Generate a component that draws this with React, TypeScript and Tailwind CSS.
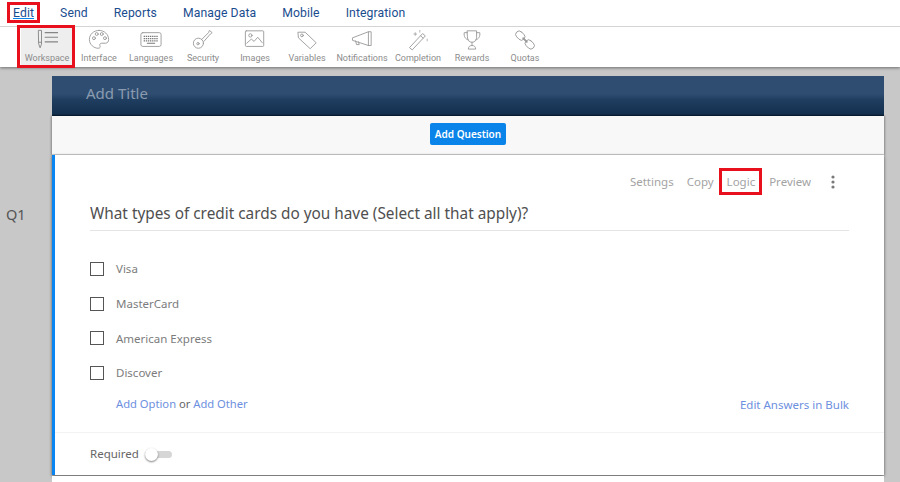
const navItems = ["Edit", "Send", "Reports", "Manage Data", "Mobile", "Integration"];

const stroke = { fill: "none", stroke: "#9a9a9a", strokeWidth: 1, strokeLinejoin: "round" as const, strokeLinecap: "round" as const };

const tools = [
  {
    label: "Workspace",
    width: "w-[52px]",
    icon: (
      <g {...stroke} stroke="#858585">
        <path d="M3 1.500h3v15l-1.500 4L3 16.500z" />
        <path d="M3 14.500h3" />
        <path d="M10 4h14M10 9h14M10 14h14" strokeWidth={1.3} />
      </g>
    ),
  },
  {
    label: "Interface",
    width: "w-[52px]",
    icon: (
      <g {...stroke}>
        <path d="M12 1.500C6 1.500 1.500 6 1.500 11.500 1.500 17 6.500 21 11 21c2.500 0 2.500-1.500 2-2.700-.6-1.500.2-2.800 2-2.800h4c2.500 0 3.500-2 3.500-4C22.500 6 18 1.500 12 1.500z" />
        <circle cx="6.500" cy="10" r="1.600" />
        <circle cx="9.500" cy="5.500" r="1.600" />
        <circle cx="15" cy="5.500" r="1.600" />
        <circle cx="18.500" cy="10" r="1.600" />
      </g>
    ),
  },
  {
    label: "Languages",
    width: "w-[52px]",
    icon: (
      <g {...stroke}>
        <rect x="1" y="4" width="22" height="15" rx="2" />
        <path d="M4 8h16M4 10.500h16M4 13h16" stroke="#777" strokeDasharray="1.500 0.800" strokeWidth={1.500} strokeLinecap="butt" />
        <path d="M8 15.500h8" stroke="#777" strokeWidth={1.200} />
      </g>
    ),
  },
  {
    label: "Security",
    width: "w-[52px]",
    icon: (
      <g {...stroke}>
        <circle cx="7" cy="15.500" r="5.500" />
        <circle cx="6.500" cy="16" r="1.300" />
        <path d="M10.500 11.500L18 4l1-2.500 3 2.500-2 1.500-7 8" />
      </g>
    ),
  },
  {
    label: "Images",
    width: "w-[52px]",
    icon: (
      <g {...stroke}>
        <rect x="1.500" y="2" width="20" height="17" rx="1" />
        <circle cx="7" cy="7" r="1.800" />
        <path d="M3 15.500l5-4.500 3 2.500 4-4.500 5 6" />
      </g>
    ),
  },
  {
    label: "Variables",
    width: "w-[52px]",
    icon: (
      <g {...stroke}>
        <path d="M2.500 3.500h7.500l12 11.500-6.500 6.500L3 10z" />
        <circle cx="6.500" cy="7" r="1.500" />
      </g>
    ),
  },
  {
    label: "Notifications",
    width: "w-[58px]",
    icon: (
      <g {...stroke}>
        <path d="M2 9.500l17-6.500v15L2 12.500z" />
        <path d="M19 3h3v15h-3M5 13l1 4h3l-.8-3" />
      </g>
    ),
  },
  {
    label: "Completion",
    width: "w-[54px]",
    icon: (
      <g {...stroke}>
        <path d="M3 20l14-15 3 2.500L6 22.500z" />
        <path d="M15 7.500l2.500 2.500" />
        <path d="M9 4v3M7.500 5.500h3M14 1.500v2M22 11v2" strokeWidth={0.8} />
      </g>
    ),
  },
  {
    label: "Rewards",
    width: "w-[54px]",
    icon: (
      <g {...stroke}>
        <path d="M7 2h10v7c0 3-2 5.500-5 5.500S7 12 7 9z" />
        <path d="M7 4H3.500C3 8 4.500 11 8 12M17 4h3.500C21 8 19.500 11 16 12" />
        <path d="M12 14.500V18M8 21.500c0-2 1.500-3.500 4-3.500s4 1.500 4 3.500z" />
      </g>
    ),
  },
  {
    label: "Quotas",
    width: "w-[52px]",
    icon: (
      <g {...stroke}>
        <rect x="1.500" y="3.500" width="11" height="7.500" rx="3.700" transform="rotate(45 7 7)" />
        <rect x="11.500" y="13" width="11" height="7.500" rx="3.700" transform="rotate(45 17 17)" />
        <path d="M10 10l4 4" strokeWidth={2} />
      </g>
    ),
  },
];

const answers = ["Visa", "MasterCard", "American Express", "Discover"];

export default function App() {
  return (
    <div className="relative h-[482px] w-[900px] overflow-hidden bg-[#c8c8c8] font-['Noto_Sans','Open_Sans',sans-serif]">
      <div className="relative z-10 bg-white shadow-[0_1px_3px_rgba(0,0,0,0.45)]">
        <nav className="flex h-[27px] items-center gap-[26px] border-b border-[#d4d4d4] pl-[13px] font-['Roboto',sans-serif] text-[12.2px] tracking-[0.1px] text-[#1a4d8f]">
          {navItems.map((item, idx) => (
            <span key={item} className={idx === 0 ? "underline decoration-[#0a84e8] underline-offset-[1px]" : ""}>
              {item}
            </span>
          ))}
        </nav>
        <div className="flex h-[40px] pl-[21px]">
          {tools.map((tool, idx) => (
            <div
              key={tool.label}
              className={`flex flex-col items-center whitespace-nowrap pt-[2px] ${tool.width} ${idx === 0 ? "bg-[#eeeeee]" : ""}`}
            >
              <svg width="22" height="22" viewBox="0 0 24 24">
                {tool.icon}
              </svg>
              <span className="mt-[1px] font-['Roboto',sans-serif] text-[9px] leading-[12px] text-[#8b8b8b]">{tool.label}</span>
            </div>
          ))}
        </div>
      </div>

      <div className="flex pt-[9px]">
        <div className="flex w-[52px] flex-col pl-[6px] pt-[128px] text-[14.5px] leading-[20px] text-[#555555]">Q1</div>
        <div className="w-[832px]">
          <div className="flex h-[40px] items-center bg-[linear-gradient(#2f4d70_0%,#2f4d70_45%,#1f3d5f_60%,#14304f_95%,#0b1d33_100%)] pb-[5px] pl-[34px] text-[15px] text-[#8a9bb0]">
            Add Title
          </div>
          <div className="flex h-[39px] items-center justify-center border-b border-[#d0d0d0] bg-[#f8f8f8] pb-[2px] shadow-[-1px_0_2px_rgba(0,0,0,0.3),1px_0_2px_rgba(0,0,0,0.3)]">
            <button className="h-[22px] rounded-[2px] bg-[#0a84e8] px-[5px] text-[10px] font-semibold text-white">
              Add Question
            </button>
          </div>
          <div className="flex h-[320px] flex-col border-l-[3px] border-[#0a84f0] bg-white shadow-[0_1px_3px_rgba(0,0,0,0.6)]">
            <div className="flex h-[277px] flex-col pl-[35px] pr-[35px]">
              <div className="flex h-[53px] items-center justify-end gap-[13px] pr-[14px] pt-[1px] text-[11.5px] text-[#a3a3a3]">
                <span>Settings</span>
                <span>Copy</span>
                <span>Logic</span>
                <span className="ml-[1px]">Preview</span>
                <svg className="ml-[7px]" width="4" height="14" viewBox="0 0 4 14" fill="#7a7a7a">
                  <circle cx="2" cy="2" r="1.600" />
                  <circle cx="2" cy="7" r="1.600" />
                  <circle cx="2" cy="12" r="1.600" />
                </svg>
              </div>
              <h2 className="h-[22px] text-[15.35px] leading-[10px] text-[#4f4f4f]">
                What types of credit cards do you have (Select all that apply)?
              </h2>
              <div className="border-t border-[#e4e4e4]" />
              <div className="flex flex-col gap-[20.6px] pt-[31px]">
                {answers.map((answer) => (
                  <div key={answer} className="flex h-[14px] items-center gap-[12px] text-[11.5px] text-[#7c7c7c]">
                    <span className="h-[14px] w-[14px] border border-[#555555]" />
                    <span>{answer}</span>
                  </div>
                ))}
              </div>
              <div className="mt-[16px] flex items-center justify-between pl-[26px] text-[11.5px] text-[#6d8fe0]">
                <span className="text-[11.2px]">
                  Add Option <span className="text-[#666666]">or</span> Add Other
                </span>
                <span>Edit Answers in Bulk</span>
              </div>
            </div>
            <div className="flex h-[43px] items-center gap-[6px] border-t border-[#f3f3f3] pl-[35px] text-[11.5px] text-[#666666]">
              <span>Required</span>
              <span className="flex h-[7px] w-[27px] items-center rounded-full bg-[#d6d6d6]">
                <span className="h-[13px] w-[13px] rounded-full bg-white shadow-[0_1px_2px_rgba(0,0,0,0.5)]" />
              </span>
            </div>
          </div>
          <div className="mt-[1px] h-[10px] bg-white" />
        </div>
      </div>

      {/* red annotation boxes */}
      <div className="absolute left-[7px] top-[2px] z-20 h-[21px] w-[33px] border-[3px] border-[#e8101c]" />
      <div className="absolute left-[17px] top-[25px] z-20 h-[43px] w-[58px] border-[3px] border-[#e8101c]" />
      <div className="absolute left-[719px] top-[168px] z-20 h-[27px] w-[43px] border-[3px] border-[#e8101c]" />
    </div>
  );
}
